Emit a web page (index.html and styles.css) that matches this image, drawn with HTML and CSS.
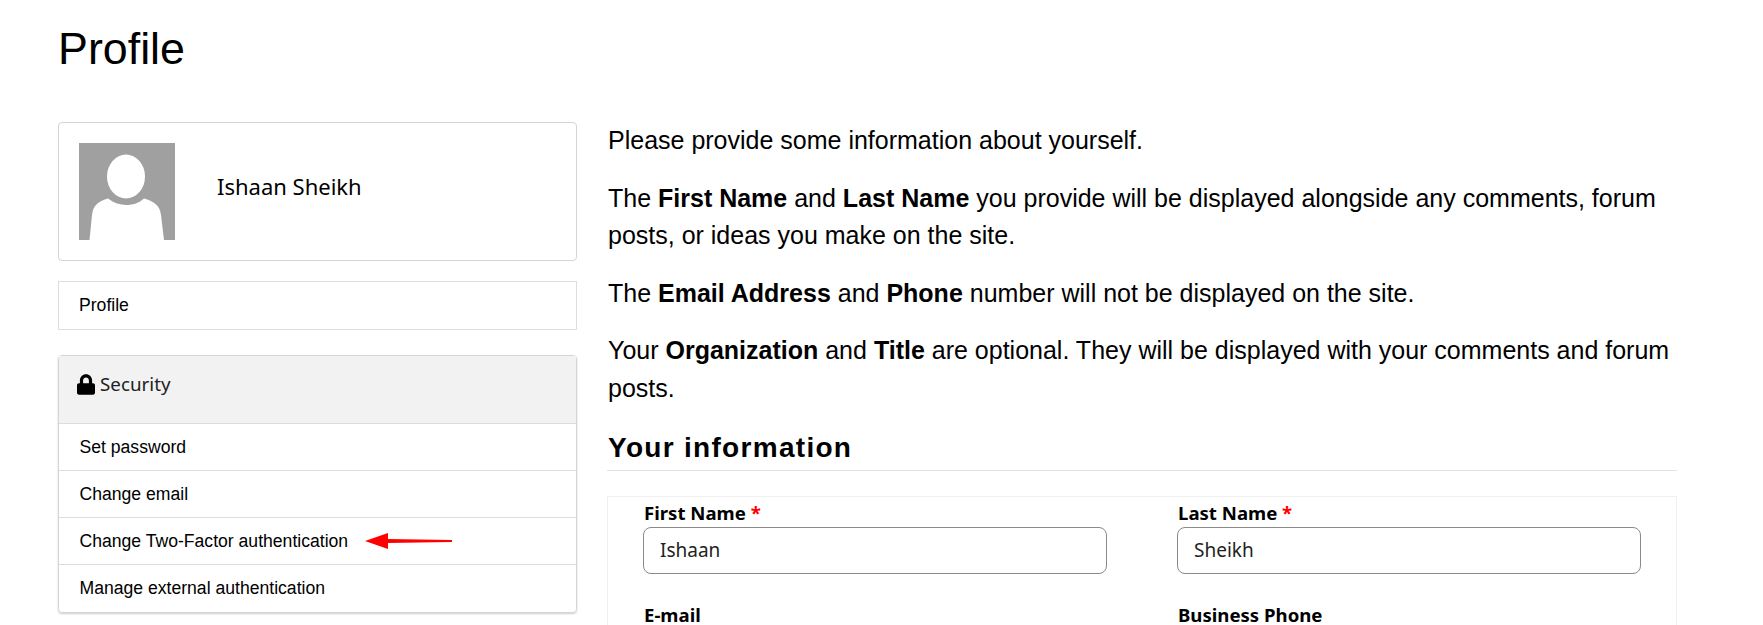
FILE: index.html

```html
<!DOCTYPE html>
<html lang="en">
<head>
  <meta charset="UTF-8">
  <title>Profile</title>
  <link rel="stylesheet" href="styles.css">
</head>
<body>
  <h1>Profile</h1>
  <div class="layout">
    <div class="sidebar">
      <div class="user-card">
        <svg class="avatar" viewBox="0 0 96 97">
          <rect width="96" height="97" fill="#a0a0a0"/>
          <ellipse cx="47" cy="33.5" rx="19" ry="22" fill="#fff"/>
          <path d="M10.5 97 L13 72 C14 62 20 58 29 55.5 C35 60 41 62 47 62 C54 62 60 60 65 55.5 C74 58 81 62 82 72 L85 97 Z" fill="#fff"/>
        </svg>
        <span class="user-name">Ishaan Sheikh</span>
      </div>

      <a class="profile-link">Profile</a>

      <div class="panel">
        <div class="panel-head">
          <svg class="lock" viewBox="0 0 448 512"><path d="M400 224h-24v-72C376 68.2 307.8 0 224 0S72 68.2 72 152v72H48c-26.5 0-48 21.5-48 48v192c0 26.5 21.5 48 48 48h352c26.5 0 48-21.5 48-48V272c0-26.5-21.5-48-48-48zm-104 0H152v-72c0-39.7 32.3-72 72-72s72 32.3 72 72v72z"/></svg>
          <span>Security</span>
        </div>
        <a class="panel-item">Set password</a>
        <a class="panel-item">Change email</a>
        <a class="panel-item">Change Two-Factor authentication
          <svg class="arrow" viewBox="0 0 88 18"><path d="M0 9 L23 1 L23 7 L87 8 L87 10 L23 11 L23 17 Z" fill="#f00"/></svg>
        </a>
        <a class="panel-item">Manage external authentication</a>
      </div>
    </div>

    <div class="content">
      <p>Please provide some information about yourself.</p>
      <p>The <b>First Name</b> and <b>Last Name</b> you provide will be displayed alongside any comments, forum posts, or ideas you make on the site.</p>
      <p>The <b>Email Address</b> and <b>Phone</b> number will not be displayed on the site.</p>
      <p>Your <b>Organization</b> and <b>Title</b> are optional. They will be displayed with your comments and forum posts.</p>

      <h2>Your information</h2>

      <div class="form">
        <div class="field">
          <label>First Name <span class="req">*</span></label>
          <input type="text" value="Ishaan">
        </div>
        <div class="field">
          <label>Last Name <span class="req">*</span></label>
          <input type="text" value="Sheikh">
        </div>
        <div class="field">
          <label>E-mail</label>
          <input type="text">
        </div>
        <div class="field">
          <label>Business Phone</label>
          <input type="text">
        </div>
      </div>
    </div>
  </div>
</body>
</html>
```

FILE: styles.css

```css
html, body {
  height: 100%;
  overflow: hidden;
}

body {
  margin: 0;
  padding: 0 86px 0 58px;
  font-family: "Liberation Sans", Arial, sans-serif;
  color: #000;
  background: #fff;
}

h1 {
  font-size: 44.8px;
  font-weight: 400;
  line-height: 50px;
  margin: 23px 0 49px;
}

.layout {
  display: flex;
  gap: 30px;
}

.sidebar {
  width: 519px;
  flex-shrink: 0;
}

.user-card {
  display: flex;
  align-items: flex-start;
  height: 139px;
  padding: 20px;
  box-sizing: border-box;
  border: 1px solid #d5d5d5;
  border-radius: 4px;
  margin-bottom: 20px;
}

.avatar {
  width: 96px;
  height: 97px;
  flex-shrink: 0;
}

.user-name {
  font-family: "Noto Sans", sans-serif;
  font-size: 22px;
  margin: 28px 0 0 42px;
}

.profile-link {
  display: block;
  height: 49px;
  line-height: 46px;
  padding-left: 20px;
  box-sizing: border-box;
  border: 1px solid #ddd;
  font-size: 17.6px;
  margin-bottom: 25px;
}

.panel {
  border: 1px solid #d5d5d5;
  border-radius: 4px;
  box-shadow: 0 1px 2px rgba(0, 0, 0, 0.2);
}

.panel-head {
  display: flex;
  align-items: flex-start;
  gap: 5px;
  height: 67px;
  padding: 15px 18px 0;
  box-sizing: border-box;
  background: #f2f2f2;
  font-family: "Noto Sans", sans-serif;
  font-size: 18.8px;
  color: #222;
}

.lock {
  width: 18px;
  height: 21px;
  margin-top: 3px;
}

.panel-item {
  display: block;
  position: relative;
  height: 47px;
  line-height: 46px;
  padding-left: 20.5px;
  box-sizing: border-box;
  border-top: 1px solid #ddd;
  font-size: 17.6px;
}

.panel-item:last-child {
  height: 48px;
}

.arrow {
  position: absolute;
  left: 306px;
  top: 14px;
  width: 88px;
  height: 18px;
}

.content {
  flex: 1;
  font-size: 25px;
  line-height: 37.5px;
}

.content p {
  margin: 0 0 20px;
  padding-left: 1px;
}

h2 {
  font-size: 28px;
  line-height: 36px;
  letter-spacing: 1.3px;
  text-indent: 1px;
  margin: 22.5px 0 25px;
  padding-bottom: 4px;
  border-bottom: 1px solid #e2e2e2;
}

.form {
  display: grid;
  grid-template-columns: 464px 464px;
  column-gap: 70px;
  row-gap: 28px;
  padding: 3px 35px;
  border: 1px solid #f0f0f0;
}

.field label {
  display: block;
  font-family: "Noto Sans", sans-serif;
  font-weight: 700;
  font-size: 18.6px;
  line-height: 26px;
  margin-bottom: 1px;
  padding-left: 1px;
}

.req {
  color: #f00;
}

.field input {
  display: block;
  width: 100%;
  height: 47px;
  box-sizing: border-box;
  padding: 0 16px;
  border: 1px solid #8a8a8a;
  border-radius: 8px;
  font-family: "Noto Sans", sans-serif;
  font-size: 19px;
  color: #222;
}
```
